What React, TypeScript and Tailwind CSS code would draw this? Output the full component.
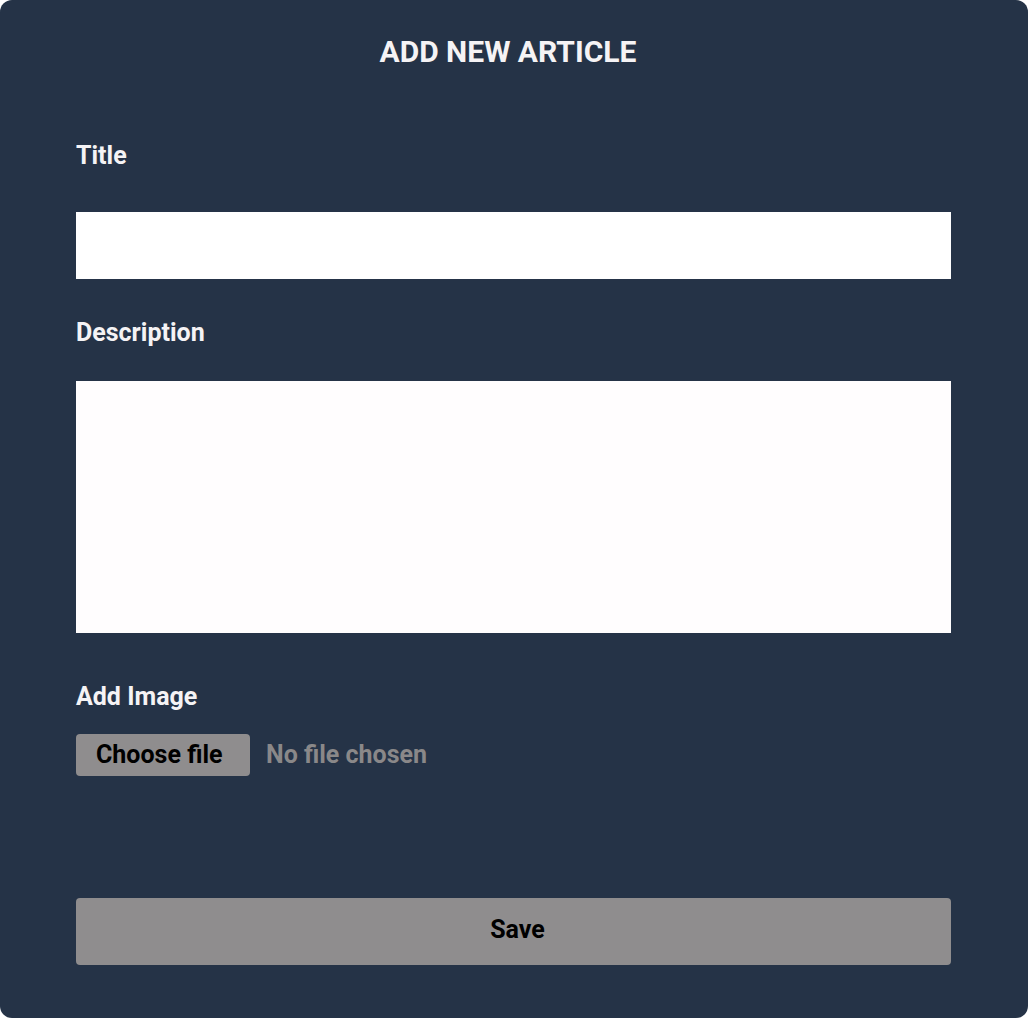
import React, { useState } from "react";

export default function App() {
  const [fileName, setFileName] = useState<string | null>(null);

  return (
    <div className="min-h-screen bg-white font-['Roboto',sans-serif]">
      <form
        className="w-[1028px] h-[1018px] rounded-xl bg-[#253347] pl-[76px] pr-[77px] flex flex-col"
        onSubmit={(e) => e.preventDefault()}
      >
        <h1 className="pt-[34px] pr-[11px] text-center text-[30px] leading-[36px] font-bold text-[#f5f3f5]">
          ADD NEW ARTICLE
        </h1>

        <label
          htmlFor="title"
          className="mt-[71px] text-[25px] leading-[30px] font-bold text-[#f5f3f5]"
        >
          Title
        </label>
        <input
          id="title"
          type="text"
          className="mt-[41px] block w-full h-[67px] bg-white border-0 outline-none px-4 text-lg"
        />

        <label
          htmlFor="description"
          className="mt-[39px] text-[25px] leading-[30px] font-bold text-[#f5f3f5]"
        >
          Description
        </label>
        <textarea
          id="description"
          className="mt-[33px] block w-full h-[252px] bg-[#fffdfe] border-0 outline-none resize-none p-4 text-lg"
        />

        <label
          htmlFor="image"
          className="mt-[49px] text-[25px] leading-[30px] font-bold text-[#f5f3f5]"
        >
          Add Image
        </label>
        <label htmlFor="image" className="mt-[22px] flex items-center gap-4 cursor-pointer">
          <span className="w-[174px] h-[42px] pl-5 flex items-center rounded bg-[#8f8d8e] text-black text-[25px] font-bold">
            Choose file
          </span>
          <span className="text-[25px] font-bold text-[#8a8889]">
            {fileName ?? "No file chosen"}
          </span>
        </label>
        <input
          id="image"
          type="file"
          className="hidden"
          onChange={(e) => setFileName(e.target.files?.[0]?.name ?? null)}
        />

        <button
          type="submit"
          className="mt-[122px] w-full h-[67px] pl-[8px] pb-[3px] rounded bg-[#8f8d8e] text-black text-[25px] font-bold"
        >
          Save
        </button>
      </form>
    </div>
  );
}
